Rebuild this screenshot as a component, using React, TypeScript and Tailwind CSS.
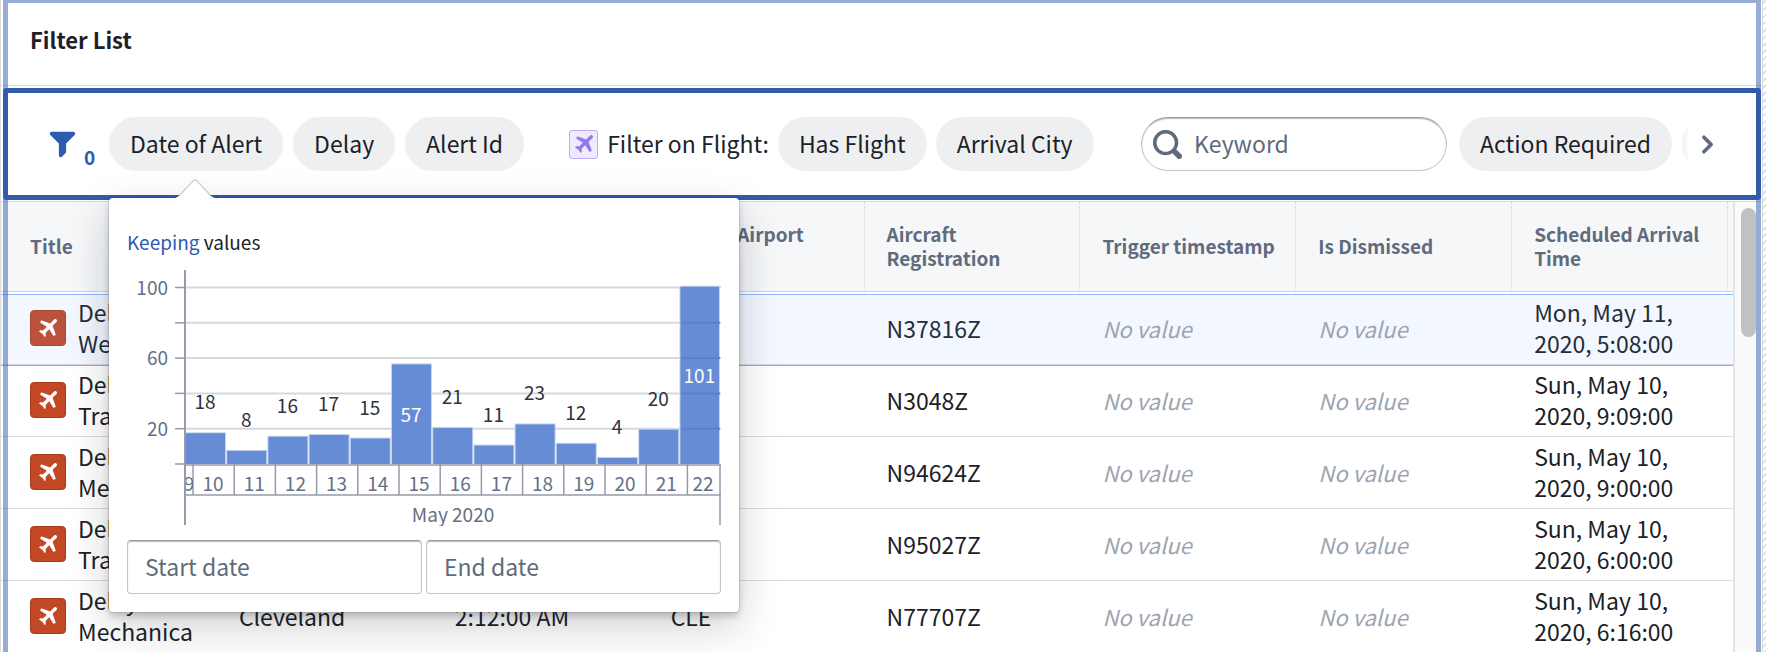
import { useState } from 'react';

const ICONS = {
  airplane:
    'M16 1.5A1.498 1.498 0 0013.44.44L9.91 3.97 2 1 1 3l5.93 3.95L3.88 10H1l-1 1 3 2 2 3 1-1v-2.88l3.05-3.05L13 15l2-1-2.97-7.91 3.53-3.53c.27-.27.44-.65.44-1.06z',
  filter:
    'M13.99.99h-12a1.003 1.003 0 00-.71 1.71l4.71 4.71V14a1.003 1.003 0 001.71.71l2-2c.18-.18.29-.43.29-.71V7.41L14.7 2.7a1.003 1.003 0 00-.71-1.71z',
  search:
    'M15.55 13.43l-2.67-2.68a6.94 6.94 0 001.11-3.76c0-3.87-3.13-7-7-7s-7 3.13-7 7 3.13 7 7 7c1.39 0 2.68-.42 3.76-1.11l2.68 2.67a1.498 1.498 0 102.12-2.12zm-8.56-1.44c-2.76 0-5-2.24-5-5s2.24-5 5-5 5 2.24 5 5-2.24 5-5 5z',
  chevronRight:
    'M10.71 7.29l-4-4a1.003 1.003 0 00-1.42 1.42L8.59 8 5.3 11.29c-.19.18-.3.43-.3.71a1.003 1.003 0 001.71.71l4-4c.18-.18.29-.43.29-.71 0-.28-.11-.53-.29-.71z',
};

function Icon({ name, className }: { name: keyof typeof ICONS; className: string }) {
  return (
    <svg viewBox="0 0 16 16" fill="currentColor" className={className} aria-hidden="true">
      <path fillRule="evenodd" d={ICONS[name]} />
    </svg>
  );
}

const HEADERS = ['Title', '', '', 'Arrival Airport Code', 'Aircraft Registration', 'Trigger timestamp', 'Is Dismissed', 'Scheduled Arrival Time'];

const ROWS = [
  { title: 'Delay - Weather', city: '', time: '', airport: '', registration: 'N37816Z', arrival: 'Mon, May 11, 2020, 5:08:00' },
  { title: 'Delay - Traffic', city: '', time: '', airport: '', registration: 'N3048Z', arrival: 'Sun, May 10, 2020, 9:09:00' },
  { title: 'Delay - Mechanica', city: '', time: '', airport: '', registration: 'N94624Z', arrival: 'Sun, May 10, 2020, 9:00:00' },
  { title: 'Delay - Traffic', city: '', time: '', airport: '', registration: 'N95027Z', arrival: 'Sun, May 10, 2020, 6:00:00' },
  { title: 'Delay - Mechanica', city: 'Cleveland', time: '2:12:00 AM', airport: 'CLE', registration: 'N77707Z', arrival: 'Sun, May 10, 2020, 6:16:00' },
];

const COUNTS = [18, 8, 16, 17, 15, 57, 21, 11, 23, 12, 4, 20, 101];

// Chart geometry
const AXIS_X = 58;
const BASE_Y = 200;
const RIGHT = 593;
const STEP = 41.2;
const UNIT = 1.765;

function Histogram() {
  return (
    <svg viewBox="0 0 594 262" className="block w-full" role="img" aria-label="Alerts per day, May 2020">
      {[20, 40, 60, 80, 100].map((v) => (
        <line key={v} x1={AXIS_X} x2={RIGHT + 1} y1={BASE_Y - v * UNIT} y2={BASE_Y - v * UNIT} stroke="#d5d9df" strokeWidth="2" />
      ))}
      {[0, 20, 40, 60, 80, 100].map((v) => (
        <line key={v} x1={AXIS_X - 10} x2={AXIS_X} y1={BASE_Y - v * UNIT} y2={BASE_Y - v * UNIT} stroke="#949bab" strokeWidth="1.5" />
      ))}
      {[20, 60, 100].map((v) => (
        <text key={v} x="41" y={BASE_Y - v * UNIT + 7} textAnchor="end" fontSize="19" fill="#667085">
          {v}
        </text>
      ))}

      {COUNTS.map((count, i) => {
        const x = AXIS_X + 1 + i * STEP;
        const width = Math.min(41, RIGHT + 1 - x);
        const height = count * UNIT;
        return (
          <g key={i}>
            <rect x={x - 1} y={BASE_Y - height} width={width} height={height} fill="#c6d4ef" />
            <rect x={x} y={BASE_Y - height + 1} width={width - 2} height={height - 1} fill="#668cd6" />
          </g>
        );
      })}
      {[20, 40, 60, 80].map((v) => (
        <line key={v} x1="554" x2={RIGHT} y1={BASE_Y - v * UNIT} y2={BASE_Y - v * UNIT} stroke="#5b80ca" strokeWidth="2" />
      ))}
      {COUNTS.map((count, i) => {
        const inside = count > 50;
        const top = BASE_Y - count * UNIT;
        return (
          <text
            key={i}
            x={AXIS_X + 20 + i * STEP}
            y={inside ? (BASE_Y + top) / 2 + 8 : top - 23}
            textAnchor="middle"
            fontSize="19"
            fill={inside ? '#ffffff' : '#2f3140'}
          >
            {count}
          </text>
        );
      })}

      {/* Day band */}
      <g stroke="#949bab" strokeWidth="1.5">
        <line x1={AXIS_X} x2={AXIS_X} y1="6" y2="261" strokeWidth="2" />
        <line x1={AXIS_X} x2={RIGHT + 1} y1={BASE_Y + 1} y2={BASE_Y + 1} />
        <line x1={AXIS_X} x2={RIGHT + 1} y1="231" y2="231" />
        <line x1={RIGHT} x2={RIGHT} y1={BASE_Y} y2="261" />
        {COUNTS.map((_, i) => (
          <line key={i} x1={66 + i * STEP} x2={66 + i * STEP} y1={BASE_Y} y2="231" />
        ))}
      </g>
      <clipPath id="first-day">
        <rect x="59" y="202" width="7" height="28" />
      </clipPath>
      <g fontSize="19" fill="#667085" textAnchor="middle">
        <text x="62" y="227" clipPath="url(#first-day)">9</text>
        {COUNTS.map((_, i) => (
          <text key={i} x={Math.min(86 + i * STEP, 576)} y="227">
            {i + 10}
          </text>
        ))}
        <text x="326" y="258">May 2020</text>
      </g>
    </svg>
  );
}

const PILL = 'h-[54px] shrink-0 whitespace-nowrap rounded-full bg-[#eeeff1] px-[21px] pb-[2px] text-[#1c2127]';
const DATE_INPUT =
  'h-[54px] min-w-0 flex-1 rounded-[4px] border border-[#c3c5c8] border-t-[#9b9c9e] bg-white px-[17px] pb-[2px] placeholder:text-[#5f6b7c] placeholder:opacity-100 outline-none shadow-[inset_0_1px_1px_rgba(17,20,24,0.3)]';

function DatePopover() {
  return (
    <div className="absolute left-0 top-[81px] z-30 w-[630px] rounded-[4px] bg-white p-[18px] shadow-[0_0_0_1px_rgba(17,20,24,0.1),0_4px_7px_rgba(17,20,24,0.2),0_14px_43px_rgba(17,20,24,0.2)]">
      <svg viewBox="0 0 44 20" className="absolute bottom-full left-[64px] -mb-px h-[20px] w-[44px]" aria-hidden="true">
        <path d="M0 19C5 19 7 16 19 3q3-4 6 0C37 16 39 19 44 19v1H0z" fill="#fff" />
        <path d="M0 19C5 19 7 16 19 3q3-4 6 0C37 16 39 19 44 19" fill="none" stroke="#111418" strokeOpacity="0.18" strokeWidth="1.5" />
      </svg>
      <p className="pb-[6px] pt-[10px] text-[19px] leading-[32px]">
        <a href="#keeping" className="text-[#2d5bad]">Keeping</a> values
      </p>
      <Histogram />
      <div className="mt-[14px] flex gap-1">
        <input type="text" aria-label="Start date" placeholder="Start date" className={DATE_INPUT} />
        <input type="text" aria-label="End date" placeholder="End date" className={DATE_INPUT} />
      </div>
    </div>
  );
}

function FilterBar() {
  const [open, setOpen] = useState(true);

  return (
    <div className="relative z-20 my-[2px] ml-[2px] mr-px flex items-center rounded-[3px] border-5 border-[#325bab] bg-white py-6 pl-10">
      <div className="flex h-[54px] w-[61px] shrink-0 items-center text-[#2d5bad]">
        <Icon name="filter" className="h-[29px] w-[29px]" />
        <span className="self-end pl-[7px] text-[19px] font-bold leading-[29px]">0</span>
      </div>
      <div className="flex gap-[10px]">
        <div className="relative">
          <button type="button" aria-expanded={open} onClick={() => setOpen(!open)} className={PILL}>
            Date of Alert
          </button>
          {open && <DatePopover />}
        </div>
        <button type="button" className={PILL}>Delay</button>
        <button type="button" className={PILL}>Alert Id</button>
      </div>

      <div className="ml-[45px] flex items-center gap-[9px]">
        <span className="flex h-[29px] w-[29px] items-center justify-center rounded-[3px] border border-[#bdadf5] bg-[#efebfc] text-[#9179f2]">
          <Icon name="airplane" className="h-[18px] w-[18px]" />
        </span>
        <span className="whitespace-nowrap pb-[2px]">Filter on Flight:</span>
        <button type="button" className={PILL}>Has Flight</button>
        <button type="button" className={PILL}>Arrival City</button>
      </div>

      <div className="ml-auto flex items-center gap-3">
        <label className="flex h-[54px] w-[306px] items-center gap-3 rounded-full border border-[#c3c5c8] border-t-[#9b9c9e] pl-[11px] pr-4 shadow-[inset_0_1px_1px_rgba(17,20,24,0.3)]">
          <Icon name="search" className="h-[29px] w-[29px] shrink-0 text-[#5f6b7c]" />
          <input type="search" aria-label="Keyword" placeholder="Keyword" className="min-w-0 flex-1 bg-transparent pb-[2px] outline-none placeholder:text-[#5f6b7c] placeholder:opacity-100" />
        </label>
        <button type="button" className={PILL}>Action Required</button>
      </div>
      <div className="ml-[10px] h-[54px] w-2 overflow-hidden">
        <div className="h-full w-[54px] rounded-full bg-linear-to-r from-[#eeeff1] to-white to-15%" />
      </div>
      <button type="button" aria-label="More filters" className="mr-8 flex h-[54px] w-[34px] items-center justify-center text-[#5f6b7c]">
        <Icon name="chevronRight" className="h-[29px] w-[29px]" />
      </button>
    </div>
  );
}

function AlertTable() {
  return (
    <table className="w-full table-fixed border-separate border-spacing-0 text-left">
      <colgroup>
        {HEADERS.map((_, i) => (
          <col key={i} />
        ))}
        <col className="w-[5px]" />
      </colgroup>
      <thead>
        <tr>
          {HEADERS.map((header, i) => (
            <th
              key={i}
              className="h-[92px] border-b-2 border-r border-b-white border-r-[#d0d3d8] bg-[#f5f7f9] pb-[2px] pl-[22px] pr-4 text-[19px] font-bold leading-[24px] text-[#5f6b7c] shadow-[inset_0_-1px_0_#d3d5d8] [border-right-style:dotted] first:pl-[29px]"
            >
              {header}
            </th>
          ))}
          <th className="border-b-2 border-white bg-[#f5f7f9] shadow-[inset_0_-1px_0_#d3d5d8]" />
        </tr>
      </thead>
      <tbody>
        {ROWS.map((row, i) => {
          const cell =
            i === 0
              ? 'h-[71px] pb-[3px] pl-[22px] pr-5 leading-[31px] border-b border-t border-t-[#8abbff] border-b-[#d3d8de] bg-[#f3f7ff] shadow-[0_1px_0_#8aaef0]'
              : 'h-[72px] pb-px pl-[22px] pr-5 leading-[31px] border-b border-[#d9dbde]';
          return (
            <tr key={row.registration} className={i === 0 ? 'text-[#252d38]' : ''}>
              <td className={cell}>
                <div className="flex items-center gap-3 pl-[7px]">
                  <span
                    className={`flex h-9 w-9 shrink-0 items-center justify-center rounded-[4px] border text-white ${
                      i === 0 ? 'border-[#a64733] bg-[#bc523c]' : 'border-[#a53a1e] bg-[#c24724]'
                    }`}
                  >
                    <Icon name="airplane" className="h-[18px] w-[18px]" />
                  </span>
                  <span>{row.title}</span>
                </div>
              </td>
              <td className={cell}>{row.city}</td>
              <td className={cell}>{row.time}</td>
              <td className={cell}>{row.airport}</td>
              <td className={cell}>{row.registration}</td>
              <td className={`${cell} text-[22px] italic text-[#9da4b0]`}>No value</td>
              <td className={`${cell} text-[22px] italic text-[#9da4b0]`}>No value</td>
              <td className={cell}>{row.arrival}</td>
              <td className={i === 0 ? 'border-b border-t border-t-[#8abbff] border-b-[#d3d8de] bg-[#f3f7ff] shadow-[0_1px_0_#8aaef0]' : 'border-b border-[#d9dbde]'} />
            </tr>
          );
        })}
      </tbody>
    </table>
  );
}

export default function App() {
  return (
    <div className="relative h-screen overflow-hidden bg-[repeating-linear-gradient(135deg,#ffffff_0_3px,#dfe2e6_3px_5px)] pr-[3px] font-['Noto_Sans_CJK_SC',sans-serif] text-[23px] leading-[31px] text-[#1c2127]">
      <div className="min-h-full border-x border-[#d9dbde] bg-white">
        <header className="flex h-[86px] items-center border-b border-[#dcdcdd] pb-[6px] pl-[29px]">
          <h1 className="text-[22px] font-bold">Filter List</h1>
        </header>
        <FilterBar />
        <div className="-mt-px flex items-start border-t border-[#d9d9db]">
          <div className="min-w-0 flex-1">
            <AlertTable />
          </div>
          <div className="flex min-h-[460px] w-[29px] shrink-0 self-stretch border-l-2 border-[#e4e4e6] bg-[#fafafa] pl-[6px] pt-[6px]">
            <div className="h-[129px] w-[15px] rounded-full bg-[#c1c1c1]" />
          </div>
        </div>
      </div>
      {/* Selected panel outline */}
      <div className="pointer-events-none absolute inset-y-0 left-[3px] right-[5px] z-10 border-x-5 border-t-3 border-[#325bab]/50" />
    </div>
  );
}
